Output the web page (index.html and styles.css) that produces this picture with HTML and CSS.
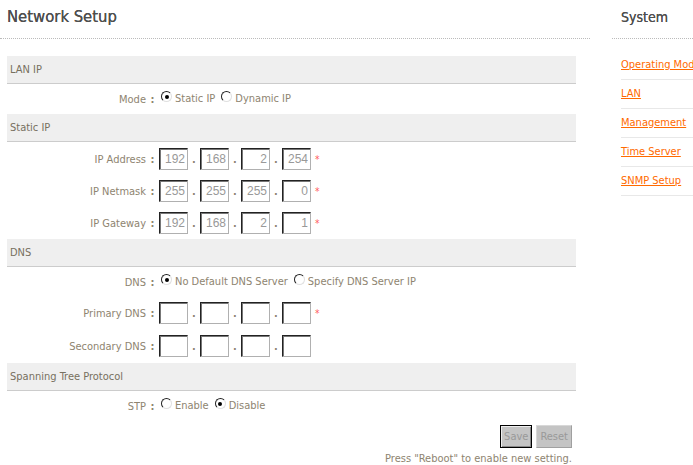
FILE: index.html
```html
<!DOCTYPE html>
<html>

<head>
  <title>Network Setup</title>
  <meta charset="utf-8">
  <link rel="stylesheet" href="styles.css">
</head>

<body>
  <div class="page">
    <div class="main">
      <h1 class="page-title">Network Setup</h1>

      <!-- LAN IP -->
      <div class="section-bar">LAN IP</div>
      <div class="row radio-row">
        <span class="label">Mode</span><span class="colon">:</span>
        <span class="field">
          <label class="opt"><input type="radio" name="mode" checked>Static IP</label>
          <label class="opt"><input type="radio" name="mode">Dynamic IP</label>
        </span>
      </div>

      <!-- Static IP -->
      <div class="section-bar">Static IP</div>
      <div class="row ip-row first-row">
        <span class="label">IP Address</span><span class="colon">:</span>
        <span class="field">
          <input class="octet" value="192"><span class="dot">.</span><input class="octet" value="168"><span class="dot">.</span><input class="octet" value="2"><span class="dot">.</span><input class="octet" value="254"><span class="req">*</span>
        </span>
      </div>
      <div class="row ip-row">
        <span class="label">IP Netmask</span><span class="colon">:</span>
        <span class="field">
          <input class="octet" value="255"><span class="dot">.</span><input class="octet" value="255"><span class="dot">.</span><input class="octet" value="255"><span class="dot">.</span><input class="octet" value="0"><span class="req">*</span>
        </span>
      </div>
      <div class="row ip-row">
        <span class="label">IP Gateway</span><span class="colon">:</span>
        <span class="field">
          <input class="octet" value="192"><span class="dot">.</span><input class="octet" value="168"><span class="dot">.</span><input class="octet" value="2"><span class="dot">.</span><input class="octet" value="1"><span class="req">*</span>
        </span>
      </div>

      <!-- DNS -->
      <div class="section-bar">DNS</div>
      <div class="row radio-row">
        <span class="label">DNS</span><span class="colon">:</span>
        <span class="field">
          <label class="opt"><input type="radio" name="dns" checked>No Default DNS Server</label>
          <label class="opt"><input type="radio" name="dns">Specify DNS Server IP</label>
        </span>
      </div>
      <div class="row ip-row">
        <span class="label">Primary DNS</span><span class="colon">:</span>
        <span class="field">
          <input class="octet"><span class="dot">.</span><input class="octet"><span class="dot">.</span><input class="octet"><span class="dot">.</span><input class="octet"><span class="req">*</span>
        </span>
      </div>
      <div class="row ip-row last-row">
        <span class="label">Secondary DNS</span><span class="colon">:</span>
        <span class="field">
          <input class="octet"><span class="dot">.</span><input class="octet"><span class="dot">.</span><input class="octet"><span class="dot">.</span><input class="octet">
        </span>
      </div>

      <!-- Spanning Tree -->
      <div class="section-bar">Spanning Tree Protocol</div>
      <div class="row radio-row">
        <span class="label">STP</span><span class="colon">:</span>
        <span class="field">
          <label class="opt"><input type="radio" name="stp">Enable</label>
          <label class="opt"><input type="radio" name="stp" checked>Disable</label>
        </span>
      </div>

      <div class="actions">
        <button class="btn btn-default" disabled>Save</button>
        <button class="btn" disabled>Reset</button>
      </div>
      <div class="note">Press "Reboot" to enable new setting.</div>
    </div>

    <div class="sidebar">
      <h2 class="side-title">System</h2>
      <ul class="side-links">
        <li><a href="#">Operating Mode</a></li>
        <li><a href="#">LAN</a></li>
        <li><a href="#">Management</a></li>
        <li><a href="#">Time Server</a></li>
        <li><a href="#">SNMP Setup</a></li>
      </ul>
    </div>
  </div>
</body>

</html>
```

FILE: styles.css
```css
:root {
  --text-color: #8e8470;
  --title-color: #4f4f4f;
  --bar-color: #efefef;
  --bar-border: #cccccc;
  --link-color: #ff6a00;
  --req-color: #ff5a5a;
}

body {
  margin: 0;
  font-family: "DejaVu Sans Condensed", "DejaVu Sans", sans-serif;
  font-stretch: condensed;
  font-size: 11px;
  color: var(--text-color);
  background: #ffffff;
}

.page {
  display: flex;
  gap: 22px;
  width: 693px;
  overflow: hidden;
}

.main {
  width: 590px;
  flex-shrink: 0;
}

.page-title,
.side-title {
  margin: 0;
  height: 39px;
  box-sizing: border-box;
  border-bottom: 1px dotted #bbbbbb;
  font-weight: normal;
  color: var(--title-color);
  text-shadow: 0 0 0.4px #444;
}

.page-title {
  font-size: 16.5px;
  padding: 7px 0 0 7px;
  margin-bottom: 17px;
}

/* --- Section bars --- */
.section-bar {
  margin-left: 7px;
  width: 569px;
  height: 28px;
  box-sizing: border-box;
  line-height: 27px;
  padding-left: 3px;
  background: var(--bar-color);
  border-bottom: 1px solid var(--bar-border);
  color: #777060;
}

/* --- Form rows --- */
.row {
  display: flex;
  align-items: center;
  margin-left: 7px;
}

.radio-row {
  height: 30px;
}

.ip-row {
  height: 32px;
}

.first-row {
  height: 33px;
  padding-top: 1px;
  box-sizing: border-box;
}

.last-row {
  height: 34px;
}

.label {
  width: 139px;
  text-align: right;
}

.colon {
  width: 13px;
  text-align: center;
  font-weight: bold;
}

.field {
  display: flex;
  align-items: center;
}

.opt {
  display: flex;
  align-items: flex-start;
  margin-right: 4px;
  line-height: 14px;
}

.opt input {
  appearance: none;
  width: 11px;
  height: 11px;
  margin: -1px 3px 0 2px;
  border-radius: 50%;
  border: 1px solid;
  border-color: #222 #e0e0e0 #e0e0e0 #222;
  background: #fff;
  box-sizing: border-box;
  display: grid;
  place-content: center;
}

.opt input:checked::before {
  content: '';
  width: 4px;
  height: 4px;
  border-radius: 50%;
  background: #000;
}

.octet {
  width: 29px;
  height: 22px;
  box-sizing: border-box;
  margin: 0;
  padding: 0 2px 0 0;
  border: 1px solid;
  border-color: #222 #b0b0b0 #b0b0b0 #222;
  box-shadow: inset 1px 1px 0 #777;
  font-family: "Liberation Sans", Arial, sans-serif;
  font-size: 12px;
  color: #999999;
  text-align: right;
}

.dot {
  width: 12px;
  text-align: center;
  font-weight: bold;
}

.req {
  margin-left: 4px;
  color: var(--req-color);
  font-size: 10px;
}

/* --- Actions --- */
.actions {
  display: flex;
  justify-content: flex-end;
  gap: 4px;
  width: 572px;
  margin-top: 4px;
}

.btn {
  height: 23px;
  padding: 0 3px;
  background: #c4c4c4;
  border: 1px solid #d8d8d8;
  border-right-color: #a0a0a0;
  border-bottom-color: #a0a0a0;
  font-family: inherit;
  font-size: 11px;
  color: #999999;
}

.btn-default {
  border: 1px solid #000;
  box-shadow: inset 1px 1px 0 #eee, inset -1px -1px 0 #888;
}

.note {
  width: 572px;
  text-align: right;
  margin-top: 4px;
}

/* --- Sidebar --- */
.sidebar {
  width: 81px;
  flex-shrink: 0;
  white-space: nowrap;
}

.side-title {
  font-size: 14px;
  padding: 9px 0 0 9px;
}

.side-links {
  list-style: none;
  margin: 12px 0 0 9px;
  padding: 0;
}

.side-links li {
  height: 29px;
  box-sizing: border-box;
  border-bottom: 1px solid #e8e8e8;
  line-height: 28px;
}

.side-links a {
  color: var(--link-color);
}
```
